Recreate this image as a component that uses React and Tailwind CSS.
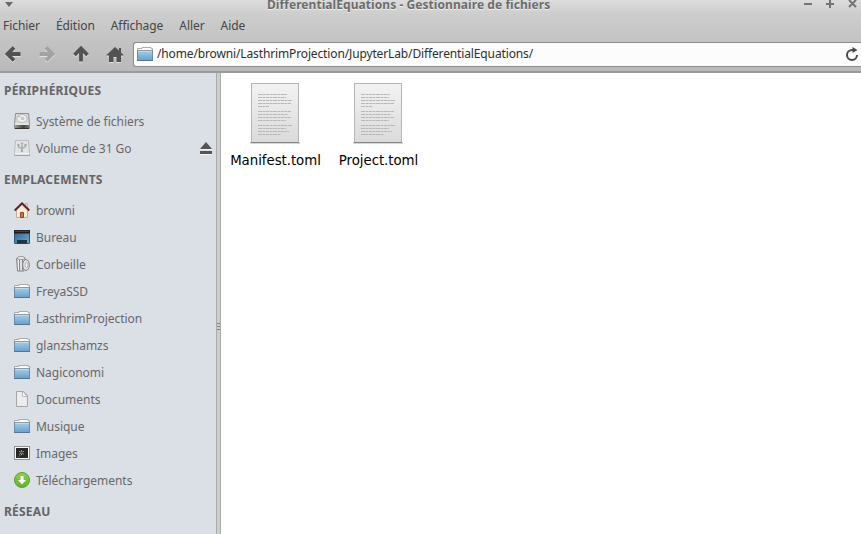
import React from "react";

const icon = "mb-px shrink-0";

function Folder() {
  return (
    <svg width="16" height="16" viewBox="0 0 16 16" className={icon}>
      <path d="M.5 5V2.500h4.500v-1h9v1h1.500V5" fill="#fdfdfd" stroke="#a9acaf" />
      <rect x=".5" y="4.500" width="15" height="10" fill="url(#folderBlue)" stroke="#6f8ba3" />
      <path d="M.5 4.500h15" stroke="#8d99a3" />
      <path d="M1 5.500h14" stroke="#c2dbec" />
      <path d="M0 14.500h16" stroke="#557590" />
    </svg>
  );
}

function Drive() {
  return (
    <svg width="16" height="16" viewBox="0 0 16 16" className={icon}>
      <path d="M1.500.5h13l1 11v4H.5v-4z" fill="#d8d8d8" stroke="#8f8f8f" />
      <ellipse cx="8" cy="5.500" rx="5" ry="4" fill="#f0f0f0" stroke="#bcbcbc" />
      <ellipse cx="8.500" cy="5.500" rx="1.500" ry="1.100" fill="#ccc" stroke="#aaa" strokeWidth=".6" />
      <path d="m3.500 3 3 1" stroke="#b5b5b5" />
      <path d="M1 11h14" stroke="#f0f0f0" />
      <path d="M1 12h14v3H1z" fill="url(#driveFront)" />
      <path d="M1 15.500h14" stroke="#333" />
    </svg>
  );
}

function Usb() {
  return (
    <svg width="16" height="16" viewBox="0 0 16 16" className={icon}>
      <path d="M1.500.5h13l1 12v3H.5v-3z" fill="#e0e2e4" stroke="#bbbdc0" />
      <path d="M1 13.500h14" stroke="#f3f3f3" />
      <path d="M.5 15.500h15" stroke="#9fa1a4" />
      <path d="M8 3v8M4.500 5v2l3.500 1.500 3.500-2V4.500" fill="none" stroke="#a9abad" strokeWidth="1.300" />
      <path d="M6.500 4 8 2l1.500 2zM3.500 4h2v2h-2zM10.500 4h2v2h-2zM7 10h2v2H7z" fill="#a4a6a8" />
    </svg>
  );
}

function House() {
  return (
    <svg width="16" height="16" viewBox="0 0 16 16" className={icon}>
      <path d="M11.500 1.500h2v5h-2z" fill="#eee0d0" stroke="#a89a8e" strokeWidth=".7" />
      <path d="M2.500 8 8 2.500 13.500 8v7.500h-11z" fill="#f8eadb" stroke="#bda996" strokeWidth=".9" />
      <path d="M.7 8.500 8 1.300l7.300 7.200" fill="none" stroke="#5f2020" strokeWidth="1.900" />
      <path d="M6.500 15.500v-5h3v5z" fill="#cf7a3a" stroke="#87461c" />
    </svg>
  );
}

function Desktop() {
  return (
    <svg width="16" height="16" viewBox="0 0 16 16" className={icon}>
      <rect x=".5" y="1.500" width="15" height="13" rx=".5" fill="url(#deskBlue)" stroke="#2b5475" />
      <path d="M0 1h16v3.500H0z" fill="#1c1c1c" />
      <path d="M1 2.300h14" stroke="#4c4c4c" />
      <path d="M3 11h10v3.500H3z" fill="#1d3447" />
    </svg>
  );
}

function Trash() {
  return (
    <svg width="16" height="16" viewBox="0 0 16 16" className={icon}>
      <path d="M2.500 2.500h8.500l-1 12.500H3.500z" fill="#cfcfd2" stroke="#85858a" />
      <ellipse cx="7" cy="2" rx="4" ry="1.500" fill="#eee" stroke="#85858a" strokeWidth=".8" />
      <path d="M5.500 4v10.500M8.500 4v10" stroke="#85858c" />
      <path d="M4.500 4v10M7 4v10" stroke="#f2f2f4" />
      <ellipse cx="12" cy="9" rx="3.300" ry="5.500" fill="#e4e4e6" stroke="#85858a" />
      <ellipse cx="12.500" cy="9" rx="1.400" ry="2.800" fill="#f6f6f6" stroke="#a4a4a8" strokeWidth=".8" />
    </svg>
  );
}

function Documents() {
  return (
    <svg width="16" height="16" viewBox="0 0 16 16" className={icon}>
      <path d="M2.500.5h7l4 4v11h-11z" fill="#ececec" stroke="#a5a5a5" />
      <path d="M8.500 1v4.500H13L9.500 1z" fill="#fafafa" stroke="#b9b9b9" />
    </svg>
  );
}

function Images() {
  return (
    <svg width="16" height="16" viewBox="0 0 16 16" className={icon}>
      <rect x=".5" y="1.500" width="15" height="13" fill="#f7f7f7" stroke="#8f8f8f" />
      <rect x="2" y="3" width="12" height="10" fill="#272727" />
      <path d="M7.500 5.200v5M5.200 6.300l4.600 3M5.200 9.300l4.600-3" stroke="#b4b4b4" strokeWidth=".9" />
      <path d="m4 12 2.500-2" stroke="#777" strokeWidth=".8" />
      <circle cx="7.500" cy="7.800" r="1" fill="#333" />
    </svg>
  );
}

function Download() {
  return (
    <svg width="16" height="16" viewBox="0 0 16 16" className={icon}>
      <circle cx="8" cy="8" r="7.500" fill="url(#dlGreen)" stroke="#5a9f35" />
      <path d="M6.500 4h3v4H12l-4 4.500L4 8h2.500z" fill="#fff" />
    </svg>
  );
}

function Eject() {
  return (
    <svg width="12" height="13" viewBox="0 0 12 13" className="mb-px ml-auto mr-1">
      <path d="M0 12.500h12M0 7.500h12" stroke="#f4f5f6" />
      <path d="m6 0 6 7H0zM0 9h12v3H0z" fill="#555" />
    </svg>
  );
}

const nav = "shrink-0 overflow-visible drop-shadow-[0_1px_0_#e0e0e0]";

function NavArrow({ dir }) {
  const turn = dir === "right" ? "rotate(180 8 8)" : dir === "up" ? "rotate(90 8 8)" : undefined;
  return (
    <svg width="16" height="16" viewBox="0 0 16 16" className={nav}>
      <g transform={turn}>
        <path d="M9 1.500 2.500 8 9 14.500M3 8h12.500" fill="none" stroke={dir === "right" ? "#a2a2a2" : "#525252"} strokeWidth="3.800" />
      </g>
    </svg>
  );
}

function NavHome() {
  return (
    <svg width="18" height="16" viewBox="0 0 18 16" className={nav + " -ml-px"}>
      <path d="M9 1 .5 9v.5H3V16h4.500v-5h3v5H15V9.500h2.500V9L15 6.500V2h-2v2.500z" fill="#525252" />
    </svg>
  );
}

function Reload() {
  return (
    <svg width="12" height="14" viewBox="0 0 12 14" className="mb-px ml-auto mr-[3px] shrink-0">
      <path d="M7.500 3H6a5 5 0 1 0 5 5" fill="none" stroke="#4b4b4b" strokeWidth="2" />
      <path d="m6.500 0 5 3-5 3z" fill="#4b4b4b" />
    </svg>
  );
}

const LINES = [
  [11, 29], [14, 28], [17, 34], [20, 33], [23, 11],
  [28, 33], [31, 30], [34, 33], [37, 28],
  [42, 34], [45, 28], [48, 31], [51, 23],
];

function TextFile({ name, className }) {
  return (
    <div className={"flex flex-col items-center " + className}>
      <svg width="50" height="62" viewBox="0 0 50 62">
        <path d="M0 60h50" stroke="#000" strokeOpacity=".16" strokeWidth="2" />
        <rect x="1.500" y=".5" width="47" height="59" fill="url(#page)" stroke="#b5b5b5" />
        <path d="M1 59.500h48" stroke="#858585" />
        {LINES.map(([y, w]) => (
          <path key={y} d={`M8 ${y + 0.5}h${w}`} stroke="#b8b8b8" strokeDasharray="4 .5 2.500 .5" />
        ))}
      </svg>
      <span className="mt-[7px] whitespace-nowrap pl-px font-['DejaVu_Sans',sans-serif] text-[13.33px] leading-[18px] tracking-[-0.04px] text-black">{name}</span>
    </div>
  );
}

function Heading({ children, className }) {
  return <div className={"pl-1 text-[12px] font-bold leading-[18px] tracking-[0.22px] text-[#656565] " + className}>{children}</div>;
}

function Row({ icon, label, children }) {
  return (
    <div className="flex h-[27px] items-center pl-[14px]">
      {icon}
      <span className="ml-[6px] whitespace-nowrap text-[12px] tracking-[-0.03px]">{label}</span>
      {children}
    </div>
  );
}

export default function App() {
  return (
    <div className="flex h-[534px] w-[861px] flex-col overflow-hidden bg-white font-['Noto_Sans',sans-serif] text-[#686868]">
      <svg className="absolute h-0 w-0">
        <defs>
          <linearGradient id="folderBlue" x2="0" y2="1"><stop stopColor="#a9cde5" /><stop offset="1" stopColor="#64a1cd" /></linearGradient>
          <linearGradient id="deskBlue" x2="1" y2="1"><stop stopColor="#2d628c" /><stop offset="1" stopColor="#73abcf" /></linearGradient>
          <linearGradient id="dlGreen" x2="0" y2="1"><stop stopColor="#8fd04d" /><stop offset="1" stopColor="#5fb526" /></linearGradient>
          <linearGradient id="driveFront" x2="1" y2="0"><stop stopColor="#999" /><stop offset=".6" stopColor="#444" /><stop offset="1" stopColor="#777" /></linearGradient>
          <linearGradient id="page" x2="0" y2="1"><stop stopColor="#f3f3f3" /><stop offset="1" stopColor="#dadada" /></linearGradient>
        </defs>
      </svg>
      <header className="flex h-[73px] shrink-0 flex-col border-b-2 border-[#9b9b9b] bg-linear-to-b from-[#dcdcdc] via-[#cdcdcd] via-20% to-[#b9b9b9]">
        <div className="flex h-[14px] items-start">
          <svg width="8" height="6" viewBox="0 0 8 6" className="ml-[5px] mt-[2px]"><path d="M0 0h8L4 5z" fill="#686868" /></svg>
          <div className="ml-[254px] mt-[-4px] w-[284px] whitespace-nowrap text-[12px] font-bold leading-[18px] tracking-[0.065px] text-[#6c6c6c] [text-shadow:0_1px_0_#eee]">DifferentialEquations - Gestionnaire de fichiers</div>
          <svg width="54" height="9" viewBox="0 0 54 9" className="ml-auto mr-[3px]">
            <path d="M0 4h8M22 4h8M26 0v8M45 0l7 7M52 0l-7 7" stroke="#737373" strokeWidth="2" />
          </svg>
        </div>
        <nav className="flex h-[24px] items-center gap-[16px] pl-[3px] text-[12px] tracking-[-0.06px] text-[#454545]">
          <span>Fichier</span><span>Édition</span><span>Affichage</span><span>Aller</span><span>Aide</span>
        </nav>
        <div className="flex h-[33px] items-center">
          <div className="mt-[-1px] flex w-[133px] shrink-0 items-center gap-[18px] pl-[5px]">
            <NavArrow dir="left" /><NavArrow dir="right" /><NavArrow dir="up" /><NavHome />
          </div>
          <div className="mt-[-1px] flex h-[25px] flex-1 items-center rounded-l-[3px] border border-r-0 border-[#8c8c8c] bg-[#fcfcfc] pl-[3px]">
            <Folder />
            <span className="ml-[4px] whitespace-nowrap text-[12px] tracking-[-0.135px] text-[#2e2e2e]">/home/browni/LasthrimProjection/JupyterLab/DifferentialEquations/</span>
            <Reload />
          </div>
        </div>
      </header>
      <div className="flex min-h-0 flex-1">
        <aside className="w-[216px] shrink-0 bg-[#dbdfe6]">
          <Heading className="mt-[9px]">PÉRIPHÉRIQUES</Heading>
          <div className="mt-[8px]">
            <Row icon={<Drive />} label="Système de fichiers" />
            <Row icon={<Usb />} label="Volume de 31 Go"><Eject /></Row>
          </div>
          <Heading className="mt-[9px]">EMPLACEMENTS</Heading>
          <div className="mt-[8px]">
            <Row icon={<House />} label="browni" />
            <Row icon={<Desktop />} label="Bureau" />
            <Row icon={<Trash />} label="Corbeille" />
            <Row icon={<Folder />} label="FreyaSSD" />
            <Row icon={<Folder />} label="LasthrimProjection" />
            <Row icon={<Folder />} label="glanzshamzs" />
            <Row icon={<Folder />} label="Nagiconomi" />
            <Row icon={<Documents />} label="Documents" />
            <Row icon={<Folder />} label="Musique" />
            <Row icon={<Images />} label="Images" />
            <Row icon={<Download />} label="Téléchargements" />
          </div>
          <Heading className="mt-[9px]">RÉSEAU</Heading>
        </aside>
        <div className="flex w-[5px] shrink-0 flex-col border-x border-[#acacac] bg-[#cdcdcd] pt-[250px]">
          <div className="flex flex-col gap-[2px]">
            <i className="h-px bg-[#858585]" /><i className="h-px bg-[#858585]" /><i className="h-px bg-[#858585]" />
          </div>
        </div>
        <main className="flex flex-1 items-start bg-white pt-[10px]">
          <TextFile name="Manifest.toml" className="ml-[4px] w-[100px]" />
          <TextFile name="Project.toml" className="ml-[3px] w-[100px]" />
        </main>
      </div>
    </div>
  );
}
